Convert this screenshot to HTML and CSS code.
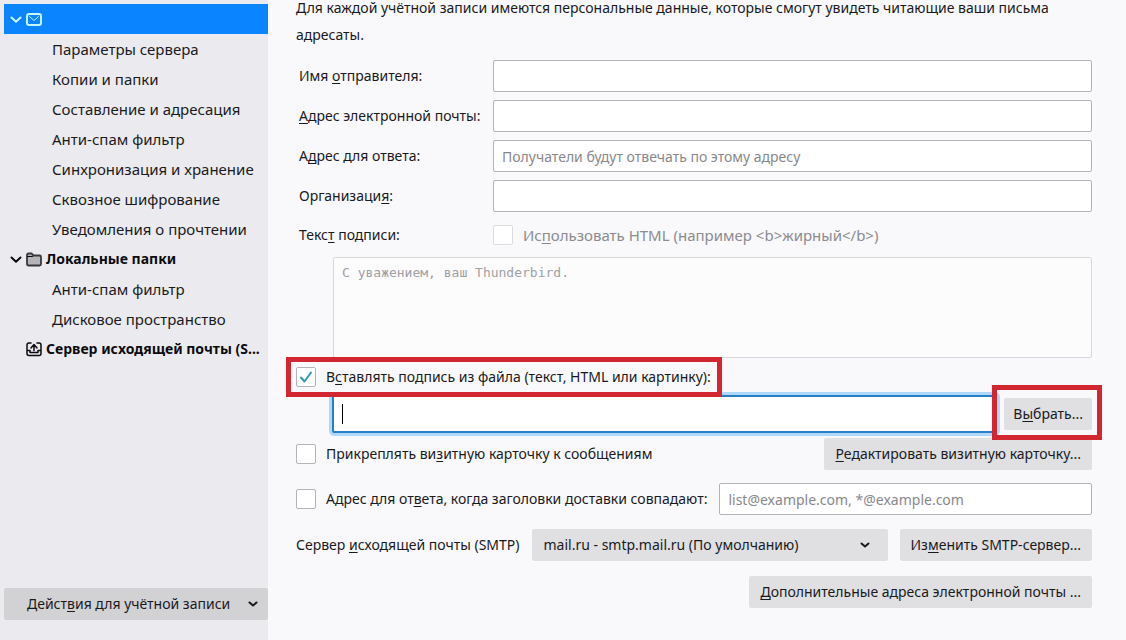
FILE: index.html
```html
<!DOCTYPE html>
<html lang="ru">
<head>
<meta charset="utf-8">
<title>Параметры учётной записи</title>
<link rel="stylesheet" href="styles.css">
</head>
<body>
<div class="app">
  <nav class="sidebar" aria-label="Учётные записи">
    <ul class="tree">
      <li class="node account selected">
        <svg class="twisty" viewBox="0 0 12 12"><path d="M1.500 4.500 6 8.800 10.500 4.500"/></svg>
        <svg class="icon" viewBox="0 0 16 16"><rect x="1" y="3" width="14" height="11" rx="2"/><path class="thin" d="M3.500 5.500 8 9.500 12.500 5.500"/></svg>
      </li>
      <li class="node child">Параметры сервера</li>
      <li class="node child">Копии и папки</li>
      <li class="node child">Составление и адресация</li>
      <li class="node child">Анти-спам фильтр</li>
      <li class="node child">Синхронизация и хранение</li>
      <li class="node child">Сквозное шифрование</li>
      <li class="node child">Уведомления о прочтении</li>
      <li class="node account">
        <svg class="twisty" viewBox="0 0 12 12"><path d="M1.500 4.500 6 8.800 10.500 4.500"/></svg>
        <svg class="icon" viewBox="0 0 16 16"><path class="filled" d="M1 13V4a1.500 1.500 0 0 1 1.500-1.500h3L7.500 4.500h6A1.500 1.500 0 0 1 15 6v7a1.500 1.500 0 0 1-1.500 1.500h-11A1.500 1.500 0 0 1 1 13Z"/><path class="thin" d="M1.500 5.500h5"/></svg>
        <span class="name">Локальные папки</span>
      </li>
      <li class="node child">Анти-спам фильтр</li>
      <li class="node child">Дисковое пространство</li>
      <li class="node account">
        <span class="twisty"></span>
        <svg class="icon" viewBox="0 0 16 16"><path class="medium" d="M5 2H3a2 2 0 0 0-2 2v8.500a2 2 0 0 0 2 2h10a2 2 0 0 0 2-2V4a2 2 0 0 0-2-2h-2M1.500 9.500h2.500v2h8v-2h2.500M8 9.500V4M5 7l3-3.500L11 7"/></svg>
        <span class="name">Сервер исходящей почты (S...</span>
      </li>
    </ul>
    <button class="button actions" type="button">
      <span>Дейст<u>в</u>ия для учётной записи</span>
      <svg class="arrow" viewBox="0 0 10 10"><path d="M1.500 3.500 5 6.500 8.500 3.500"/></svg>
    </button>
  </nav>

  <main class="main">
    <p class="intro">Для каждой учётной записи имеются персональные данные, которые смогут увидеть читающие ваши письма адресаты.</p>

    <div class="fields">
      <label for="name">Имя <u>о</u>тправителя:</label>
      <input class="text" id="name" type="text">
      <label for="email"><u>А</u>дрес электронной почты:</label>
      <input class="text" id="email" type="text">
      <label for="reply">А<u>д</u>рес для ответа:</label>
      <input class="text" id="reply" type="text" placeholder="Получатели будут отвечать по этому адресу">
      <label for="org">Организаци<u>я</u>:</label>
      <input class="text" id="org" type="text">
    </div>

    <div class="fields signature-head">
      <label for="signature">Текс<u>т</u> подписи:</label>
      <span class="check disabled">
        <input class="box" id="html" type="checkbox" disabled>
        <label for="html">Ис<u>п</u>ользовать HTML (например &lt;b&gt;жирный&lt;/b&gt;)</label>
      </span>
    </div>
    <textarea class="signature" id="signature" disabled placeholder="С уважением, ваш Thunderbird."></textarea>

    <div class="check marked from-file">
      <input class="box" id="attach" type="checkbox" checked>
      <label for="attach">В<u>с</u>тавлять подпись из файла (текст, HTML или картинку):</label>
    </div>
    <div class="file-row">
      <div class="file-field">
        <input class="file" type="text" aria-label="Файл подписи">
        <span class="caret"></span>
      </div>
      <div class="marked choose"><button class="button compact" type="button">В<u>ы</u>брать...</button></div>
    </div>

    <div class="row card">
      <div class="check">
        <input class="box" id="vcard" type="checkbox">
        <label for="vcard">Прикреплять ви<u>з</u>итную карточку к сообщениям</label>
      </div>
      <button class="button" type="button"><u>Р</u>едактировать визитную карточку...</button>
    </div>

    <div class="row match">
      <div class="check">
        <input class="box" id="match" type="checkbox">
        <label for="match">Адрес для от<u>в</u>ета, когда заголовки доставки совпадают:</label>
      </div>
      <input class="text grow" type="text" aria-label="Заголовки доставки" placeholder="list@example.com, *@example.com">
    </div>

    <div class="row smtp">
      <label for="smtp">Сервер <u>и</u>сходящей почты (SMTP)</label>
      <div class="select grow">
        <select id="smtp"><option>mail.ru - smtp.mail.ru (По умолчанию)</option></select>
        <svg class="arrow" viewBox="0 0 10 10"><path d="M1.500 3.500 5 6.500 8.500 3.500"/></svg>
      </div>
      <button class="button" type="button">Из<u>м</u>енить SMTP-сервер...</button>
    </div>

    <div class="row end">
      <button class="button" type="button"><u>Д</u>ополнительные адреса электронной почты ...</button>
    </div>
  </main>
</div>
</body>
</html>
```
FILE: styles.css
```css
* {
  box-sizing: border-box;
}

body {
  margin: 0;
  background: #f9f9fb;
  color: #1a1a1e;
  font: 14px/20px "Noto Sans", "Open Sans", sans-serif;
}

button, input, select {
  font: inherit;
  color: inherit;
}

u {
  text-decoration-thickness: 1px;
  text-underline-offset: 2px;
}

svg {
  flex: none;
  fill: none;
  stroke: currentColor;
  stroke-width: 2;
  stroke-linecap: round;
  stroke-linejoin: round;
}

.app {
  display: flex;
  min-height: 100vh;
  overflow: hidden;
}

/* Account tree */
.sidebar {
  display: flex;
  flex: none;
  flex-direction: column;
  justify-content: space-between;
  width: 268px;
  padding: 4px 0 20px 4px;
  background: #ebebef;
}

.tree {
  margin: 0;
  padding: 0;
  list-style: none;
}

.node {
  display: flex;
  align-items: center;
  height: 30px;
  white-space: nowrap;
}

.child {
  padding-left: 48px;
  font-size: 15px;
}

.account {
  gap: 4px;
  padding-left: 6px;
  color: #0c0c0f;
  font-weight: 700;
}

.selected {
  background: #0a84ff;
  color: #c4f6ff;
}

.twisty {
  flex: none;
  width: 12px;
  height: 12px;
}

.icon {
  width: 16px;
  height: 16px;
}

.medium {
  stroke-width: 1.500;
}

.thin {
  stroke-width: 1;
}

.filled {
  fill: #b4b4b9;
  stroke: #38383d;
  stroke-width: 1.800;
}

.button {
  flex: none;
  height: 32px;
  padding: 0 11px;
  border: 0;
  border-radius: 2px;
  background: #e0e0e2;
  white-space: nowrap;
}

.compact {
  padding: 0 9px;
}

.actions {
  display: flex;
  align-items: center;
  justify-content: space-between;
  padding: 0 10px 0 23px;
  background: #d2d2d5;
}

.arrow {
  width: 10px;
  height: 10px;
}

/* Settings pane */
.main {
  flex: 1;
  min-width: 0;
  margin-top: -6px;
  padding: 0 34px 32px 28px;
}

.intro {
  margin: 0 0 12px;
  line-height: 27px;
}

.fields {
  display: grid;
  grid-template-columns: 186px 1fr;
  gap: 8px;
  align-items: center;
  padding-left: 3px;
}

.fields label {
  white-space: nowrap;
}

.text {
  width: 100%;
  min-width: 0;
  height: 32px;
  padding: 0 8px;
  border: 1px solid #b4b4b8;
  border-radius: 2px;
  background: #fff;
}

::placeholder {
  color: #88888c;
  opacity: 1;
}

.signature-head {
  margin-top: 13px;
}

.check {
  display: flex;
  align-items: center;
  gap: 10px;
  white-space: nowrap;
}

.box {
  flex: none;
  width: 20px;
  height: 20px;
  margin: 0;
  appearance: none;
  border: 1px solid #b4b4b8;
  border-radius: 2px;
  background: #fff;
}

.box:checked {
  background: #fff url("data:image/svg+xml,%3Csvg xmlns='http://www.w3.org/2000/svg' viewBox='0 0 18 18'%3E%3Cpath d='M4 9.500 7.500 13.500 14 4.500' fill='none' stroke='%232f9ab5' stroke-width='2' stroke-linecap='round' stroke-linejoin='round'/%3E%3C/svg%3E");
}

.disabled {
  color: #8c8c90;
  font-size: 15px;
}

.disabled .box {
  border-color: #dcdce0;
}

.signature {
  display: block;
  width: calc(100% - 37px);
  height: 101px;
  margin: 12px 0 0 37px;
  padding: 5px 8px;
  border: 1px solid #d8d8dc;
  border-radius: 2px;
  background: #fcfcfd;
  font: 13px/20px "DejaVu Sans Mono", monospace;
  resize: none;
}

.signature::placeholder {
  color: #a0a0a4;
}

/* Red frames that point out a control */
.marked {
  position: relative;
  z-index: 1;
}

.marked::after {
  position: absolute;
  border: 5px solid #d22630;
  content: "";
  pointer-events: none;
}

.from-file {
  width: fit-content;
  margin-top: 9px;
}

.from-file::after {
  inset: -10px -11px -10px -10px;
}

.choose::after {
  inset: -13px -10px -10px -12px;
}

.file-row {
  display: flex;
  align-items: center;
  gap: 7px;
  margin: 8px 0 0 36px;
}

.file-field {
  position: relative;
  flex: 1;
}

.file {
  display: block;
  width: 100%;
  height: 38px;
  padding: 0 8px;
  border: 2px solid #2a7fc4;
  border-radius: 2px;
  outline: 0;
  background: #fff;
  box-shadow: 0 0 0 3px #b0d8fa;
}

.caret {
  position: absolute;
  top: 9px;
  left: 10px;
  width: 1px;
  height: 20px;
  background: #000;
}

.row {
  display: flex;
  align-items: center;
  justify-content: space-between;
}

.card {
  margin-top: 5px;
}

.match {
  gap: 12px;
  margin-top: 13px;
}

.smtp {
  gap: 12px;
  margin-top: 14px;
  white-space: nowrap;
}

.end {
  justify-content: flex-end;
  margin-top: 15px;
}

.grow {
  flex: 1;
}

.select {
  display: flex;
  position: relative;
  align-items: center;
}

.select select {
  width: 100%;
  height: 32px;
  padding: 0 30px 0 12px;
  appearance: none;
  border: 0;
  border-radius: 2px;
  background: #e0e0e2;
}

.select .arrow {
  position: absolute;
  right: 18px;
  pointer-events: none;
}
```
